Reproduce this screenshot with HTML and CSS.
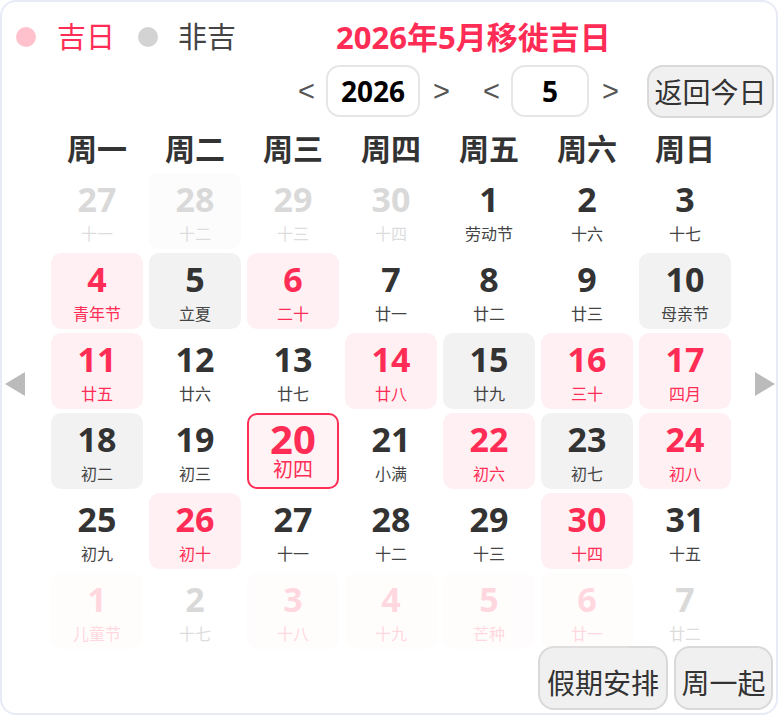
FILE: index.html
```html
<!DOCTYPE html>
<html lang="zh-CN">
<head>
<meta charset="utf-8">
<title>2026年5月移徙吉日</title>
<link rel="stylesheet" href="styles.css">
</head>
<body>
<div class="card">
  <div class="top">
    <span class="dot dot-lucky"></span><span class="legend lucky">吉日</span>
    <span class="dot dot-unlucky"></span><span class="legend">非吉</span>
    <span class="title">2026年5月移徙吉日</span>
  </div>
  <div class="controls">
    <span class="arr">&lt;</span><span class="box year">2026</span><span class="arr">&gt;</span>
    <span class="arr arr-gap">&lt;</span><span class="box month">5</span><span class="arr">&gt;</span>
    <button class="btn btn-today">返回今日</button>
  </div>
  <div class="main">
    <svg class="side side-left" width="20" height="24" viewBox="0 0 20 24"><polygon points="20,0 20,24 0,12" fill="#bbbbbb"/></svg>
    <div class="cal">
      <div class="weekdays">
        <div>周一</div><div>周二</div><div>周三</div><div>周四</div><div>周五</div><div>周六</div><div>周日</div>
      </div>
      <div class="grid">
        <div class="cell other"><div class="n">27</div><div class="l">十一</div></div>
        <div class="cell other bad"><div class="n">28</div><div class="l">十二</div></div>
        <div class="cell other"><div class="n">29</div><div class="l">十三</div></div>
        <div class="cell other"><div class="n">30</div><div class="l">十四</div></div>
        <div class="cell"><div class="n">1</div><div class="l">劳动节</div></div>
        <div class="cell"><div class="n">2</div><div class="l">十六</div></div>
        <div class="cell"><div class="n">3</div><div class="l">十七</div></div>

        <div class="cell good"><div class="n">4</div><div class="l">青年节</div></div>
        <div class="cell bad"><div class="n">5</div><div class="l">立夏</div></div>
        <div class="cell good"><div class="n">6</div><div class="l">二十</div></div>
        <div class="cell"><div class="n">7</div><div class="l">廿一</div></div>
        <div class="cell"><div class="n">8</div><div class="l">廿二</div></div>
        <div class="cell"><div class="n">9</div><div class="l">廿三</div></div>
        <div class="cell bad"><div class="n">10</div><div class="l">母亲节</div></div>

        <div class="cell good"><div class="n">11</div><div class="l">廿五</div></div>
        <div class="cell"><div class="n">12</div><div class="l">廿六</div></div>
        <div class="cell"><div class="n">13</div><div class="l">廿七</div></div>
        <div class="cell good"><div class="n">14</div><div class="l">廿八</div></div>
        <div class="cell bad"><div class="n">15</div><div class="l">廿九</div></div>
        <div class="cell good"><div class="n">16</div><div class="l">三十</div></div>
        <div class="cell good"><div class="n">17</div><div class="l">四月</div></div>

        <div class="cell bad"><div class="n">18</div><div class="l">初二</div></div>
        <div class="cell"><div class="n">19</div><div class="l">初三</div></div>
        <div class="cell today"><div class="n">20</div><div class="l">初四</div></div>
        <div class="cell"><div class="n">21</div><div class="l">小满</div></div>
        <div class="cell good"><div class="n">22</div><div class="l">初六</div></div>
        <div class="cell bad"><div class="n">23</div><div class="l">初七</div></div>
        <div class="cell good"><div class="n">24</div><div class="l">初八</div></div>

        <div class="cell"><div class="n">25</div><div class="l">初九</div></div>
        <div class="cell good"><div class="n">26</div><div class="l">初十</div></div>
        <div class="cell"><div class="n">27</div><div class="l">十一</div></div>
        <div class="cell"><div class="n">28</div><div class="l">十二</div></div>
        <div class="cell"><div class="n">29</div><div class="l">十三</div></div>
        <div class="cell good"><div class="n">30</div><div class="l">十四</div></div>
        <div class="cell"><div class="n">31</div><div class="l">十五</div></div>

        <div class="cell other good"><div class="n">1</div><div class="l">儿童节</div></div>
        <div class="cell other"><div class="n">2</div><div class="l">十七</div></div>
        <div class="cell other good"><div class="n">3</div><div class="l">十八</div></div>
        <div class="cell other good"><div class="n">4</div><div class="l">十九</div></div>
        <div class="cell other good"><div class="n">5</div><div class="l">芒种</div></div>
        <div class="cell other good"><div class="n">6</div><div class="l">廿一</div></div>
        <div class="cell other"><div class="n">7</div><div class="l">廿二</div></div>
      </div>
    </div>
    <svg class="side side-right" width="20" height="24" viewBox="0 0 20 24"><polygon points="0,0 0,24 20,12" fill="#bbbbbb"/></svg>
  </div>
  <div class="footer">
    <button class="btn btn-holiday">假期安排</button>
    <button class="btn btn-week">周一起</button>
  </div>
</div>
</body>
</html>
```
FILE: styles.css
```css
html, body {
  margin: 0;
  padding: 0;
  background: #ffffff;
}

body {
  font-family: "Noto Sans", "Noto Sans CJK SC", sans-serif;
  color: #333333;
}

.card {
  box-sizing: border-box;
  width: 778px;
  height: 715px;
  border: 2px solid #e8ebf5;
  border-radius: 16px;
  background: #ffffff;
  overflow: hidden;
}

/* top legend + title */
.top {
  display: flex;
  align-items: center;
  height: 54px;
  padding-top: 8px;
  padding-left: 14px;
}

.dot {
  width: 20px;
  height: 20px;
  border-radius: 50%;
  flex: none;
}

.dot-lucky {
  background: #ffc1cc;
  margin-right: 21px;
}

.dot-unlucky {
  background: #d3d3d3;
  margin-left: 23px;
  margin-right: 20px;
}

.legend {
  font-size: 29px;
  line-height: 54px;
  color: #444444;
}

.legend.lucky {
  color: #ff2d55;
}

.title {
  margin-left: 100px;
  font-size: 31px;
  font-weight: 700;
  line-height: 54px;
  color: #ff2d55;
}

/* controls */
.controls {
  display: flex;
  align-items: center;
  justify-content: flex-end;
  height: 54px;
  padding-right: 2px;
}

.arr {
  display: inline-block;
  width: 14px;
  text-align: center;
  font-family: "Liberation Sans", sans-serif;
  font-size: 29px;
  line-height: 52px;
  color: #555555;
}

.arr + .box {
  margin-left: 14px;
}

.box + .arr {
  margin-left: 13px;
}

.arr-gap {
  margin-left: 36px;
}

.box {
  box-sizing: border-box;
  height: 52px;
  border: 2px solid #e6e6e6;
  border-radius: 14px;
  background: #ffffff;
  display: flex;
  align-items: center;
  justify-content: center;
  font-size: 28px;
  font-weight: 700;
  color: #000000;
}

.year {
  width: 94px;
}

.month {
  width: 78px;
}

.btn {
  box-sizing: border-box;
  border: 2px solid #d9d9d9;
  border-radius: 16px;
  background: #f0f0f0;
  font-family: "Noto Sans CJK SC", sans-serif;
  font-size: 28px;
  color: #333333;
  padding: 0;
  margin: 0;
  cursor: pointer;
}

.btn-today {
  width: 127px;
  height: 53px;
  margin-left: 31px;
  line-height: 48px;
}

/* main calendar area */
.main {
  display: flex;
  align-items: center;
}

.side {
  flex: none;
  display: block;
}

.side-left {
  margin-left: 3px;
  margin-right: 26px;
}

.side-right {
  margin-left: 24px;
}

.cal {
  width: 680px;
  flex: none;
}

.weekdays {
  display: grid;
  grid-template-columns: repeat(7, 92px);
  column-gap: 6px;
  padding-top: 6px;
  height: 49px;
}

.weekdays div {
  text-align: center;
  font-size: 30px;
  font-weight: 700;
  line-height: 49px;
  color: #333333;
}

.grid {
  display: grid;
  grid-template-columns: repeat(7, 92px);
  grid-auto-rows: 76px;
  column-gap: 6px;
  row-gap: 4px;
}

.cell {
  box-sizing: border-box;
  border-radius: 10px;
  text-align: center;
  padding-top: 7px;
}

.cell .n {
  font-size: 34px;
  font-weight: 700;
  line-height: 38px;
  color: #333333;
}

.cell .l {
  margin-top: 6px;
  font-size: 16px;
  line-height: 20px;
  color: #444444;
}

.cell.good {
  background: #fff0f3;
}

.cell.good .n,
.cell.good .l {
  color: #ff2d55;
}

.cell.bad {
  background: #f2f2f2;
}

.cell.other {
  opacity: 0.18;
}

.cell.today {
  border: 2px solid #ff2d55;
  background: #fff3f5;
  padding-top: 6px;
}

.cell.today .n {
  font-size: 40px;
  line-height: 36px;
  color: #ff2d55;
}

.cell.today .l {
  margin-top: 2px;
  font-size: 20px;
  line-height: 22px;
  color: #ff2d55;
}

/* footer */
.footer {
  display: flex;
  justify-content: flex-end;
  gap: 6px;
  margin-top: -3px;
  padding-right: 3px;
}

.btn-holiday {
  width: 130px;
  height: 64px;
  padding-top: 8px;
}

.btn-week {
  width: 99px;
  height: 64px;
  padding-top: 8px;
}
```
